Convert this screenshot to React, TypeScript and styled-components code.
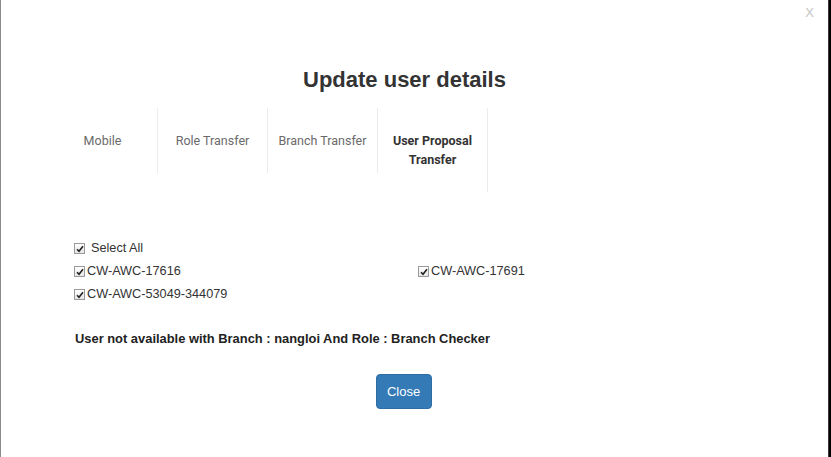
import styled, { createGlobalStyle } from "styled-components"

const GlobalStyle = createGlobalStyle`
    html, body {
        margin: 0;
        padding: 0;
        background: #000;
        height: 457px;
        overflow: hidden;
    }
    body {
        font-family: "Liberation Sans", Arial, sans-serif;
        color: #333;
    }
`

const Modal = styled.div`
    position: relative;
    box-sizing: border-box;
    width: 829px;
    height: 457px;
    background: #fff;
    border-left: 1px solid #8a8a8a;
    border-right: 1px solid #3a3a3a;
    padding-right: 20px;
    display: flex;
    flex-direction: column;
`

const Dismiss = styled.span`
    position: absolute;
    top: 5px;
    right: 14px;
    font-size: 13px;
    color: #c4c4c4;
    font-family: "Liberation Sans", Arial, sans-serif;
`

const Title = styled.h3`
    margin: 67px 0 0;
    font-size: 22px;
    line-height: 26px;
    font-weight: bold;
    text-align: center;
    color: #333;
`

const Tabs = styled.div`
    display: flex;
    align-items: flex-start;
    margin: 15px 0 0 47px;
`

const Tab = styled.div<{ $active?: boolean }>`
    box-sizing: border-box;
    width: 110px;
    padding: 23px 4px;
    border-right: 1px solid #ececec;
    text-align: center;
    font-family: Roboto, "Liberation Sans", sans-serif;
    font-size: 12.5px;
    line-height: 19px;
    color: ${p => p.$active ? "#333" : "#6a6a6a"};
    font-weight: ${p => p.$active ? 700 : 400};
`

const Options = styled.div`
    display: grid;
    grid-template-columns: 344px 344px;
    margin: 45px 0 0 73px;
    font-size: 12.7px;
    line-height: 23px;
    color: #333;
`

const Option = styled.label<{ $full?: boolean }>`
    display: flex;
    align-items: center;
    grid-column: ${p => p.$full ? "1 / span 2" : "auto"};
    gap: ${p => p.$full ? "6px" : "2px"};
`

const Box = styled.span`
    box-sizing: border-box;
    width: 11px;
    height: 11px;
    border: 1px solid #9a9a9a;
    background: linear-gradient(#fff, #e6e6e6);
    display: flex;
    align-items: center;
    justify-content: center;
`

const Message = styled.p`
    margin: 23px 0 0 74px;
    font-size: 12.9px;
    line-height: 19px;
    font-weight: bold;
    color: #222;
`

const Footer = styled.div`
    display: flex;
    justify-content: center;
    margin-top: 26px;
    padding-right: 2px;
`

const Button = styled.button`
    width: 56px;
    height: 35px;
    border: 1px solid #2e6da4;
    border-radius: 4px;
    background: #337ab7;
    color: #fff;
    font-family: "Liberation Sans", Arial, sans-serif;
    font-size: 13px;
    padding: 0;
`

const Check = () => (
    <Box>
        <svg width="8" height="8" viewBox="0 0 8 8">
            <path d="M1 4.2 L3 6.3 L7 1.2" fill="none" stroke="#222" strokeWidth="1.6" />
        </svg>
    </Box>
)

const users = ["CW-AWC-17616", "CW-AWC-17691", "CW-AWC-53049-344079"]

const App = () => {
    return (
        <>
            <GlobalStyle />
            <Modal>
                <Dismiss>X</Dismiss>
                <Title>Update user details</Title>
                <Tabs>
                    <Tab>Mobile</Tab>
                    <Tab>Role Transfer</Tab>
                    <Tab>Branch Transfer</Tab>
                    <Tab $active>User Proposal Transfer</Tab>
                </Tabs>
                <Options>
                    <Option $full><Check />Select All</Option>
                    {users.map(u => (
                        <Option key={u}><Check />{u}</Option>
                    ))}
                </Options>
                <Message>User not available with Branch : nangloi And Role : Branch Checker</Message>
                <Footer>
                    <Button>Close</Button>
                </Footer>
            </Modal>
        </>
    )
}

export default App
